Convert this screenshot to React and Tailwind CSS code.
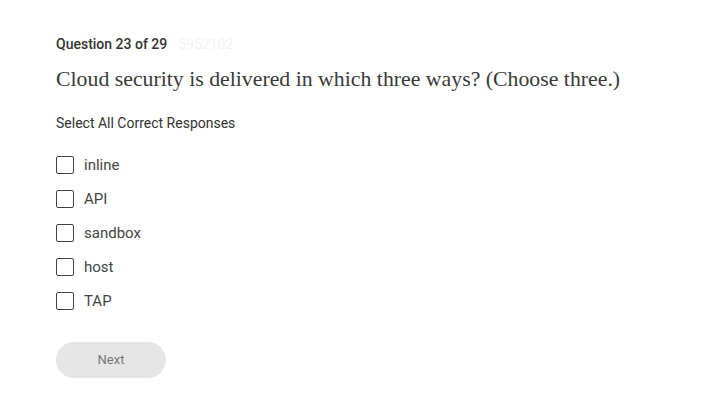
import React from 'react';

const options = ['inline', 'API', 'sandbox', 'host', 'TAP'];

const App = () => {
  return (
    <div className="w-[720px] h-[401px] bg-white font-['Roboto',sans-serif] text-[#333]">
      <div className="pl-[56px] pt-[34px]">
        <div className="flex items-baseline gap-[11px] h-[20px]">
          <p className="text-[14px] font-medium text-[#333]">Question 23 of 29</p>
          <p className="text-[14px] text-[#f3f3f3]">5952102</p>
        </div>
        <h1 className="mt-[10px] text-[21.8px] leading-[30px] text-[#3a3a3a] font-['Liberation_Serif',serif]">
          Cloud security is delivered in which three ways? (Choose three.)
        </h1>
        <p className="mt-[19px] text-[14px] leading-[20px] text-[#333]">Select All Correct Responses</p>
        <div className="mt-[23px] flex flex-col gap-[16px]">
          {options.map((o) => (
            <label key={o} className="flex items-center h-[18px] cursor-pointer">
              <span className="w-[18px] h-[18px] border-[1.5px] border-[#444] rounded-[2px] bg-white" />
              <span className="ml-[10px] text-[15px] text-[#444]">{o}</span>
            </label>
          ))}
        </div>
        <button className="mt-[32px] w-[110px] h-[36px] rounded-full bg-[#e6e6e6] text-[13px] text-[#777]">
          Next
        </button>
      </div>
    </div>
  );
};

export default App;
